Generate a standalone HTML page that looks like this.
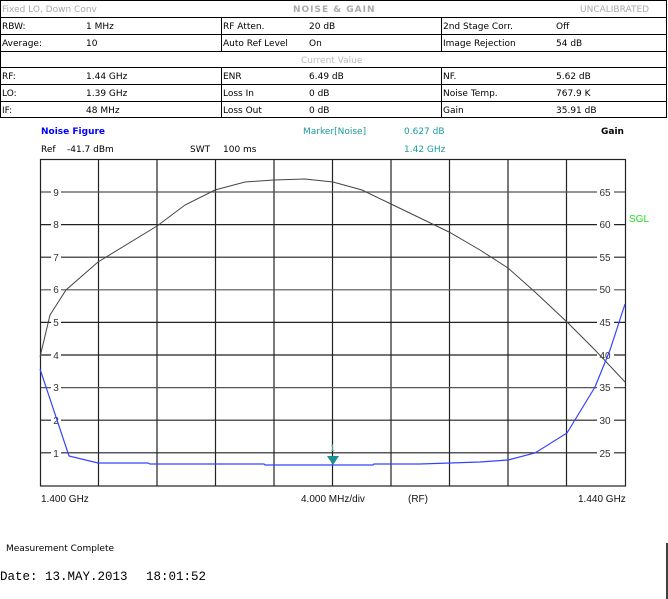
<!DOCTYPE html>
<html><head><meta charset="utf-8"><style>
html,body{margin:0;padding:0;background:#fff;width:668px;height:599px;overflow:hidden}
svg{display:block}
.t{font-family:"DejaVu Sans","Liberation Sans",sans-serif;font-size:9px}
.g{font-family:"Liberation Sans",sans-serif;font-size:10px}
</style></head><body>
<svg width="668" height="599" xmlns="http://www.w3.org/2000/svg">
<g stroke="#000" stroke-width="1" fill="none">
<rect x="0.5" y="0.5" width="666" height="117"/>
<line x1="0" y1="17.5" x2="667" y2="17.5"/>
<line x1="0" y1="34.5" x2="667" y2="34.5"/>
<line x1="0" y1="51.5" x2="667" y2="51.5"/>
<line x1="0" y1="67.5" x2="667" y2="67.5"/>
<line x1="0" y1="84.5" x2="667" y2="84.5"/>
<line x1="0" y1="101.5" x2="667" y2="101.5"/>
<line x1="221.5" y1="17" x2="221.5" y2="51"/>
<line x1="441.5" y1="17" x2="441.5" y2="51"/>
<line x1="221.5" y1="67" x2="221.5" y2="118"/>
<line x1="441.5" y1="67" x2="441.5" y2="118"/>
</g>
<g class="t" fill="#000">
<text x="2" y="12" fill="#aaa">Fixed LO, Down Conv</text>
<text x="293" y="12" fill="#aaa" font-weight="bold" letter-spacing="1">NOISE &amp; GAIN</text>
<text x="580" y="12" fill="#aaa">UNCALIBRATED</text>
<text x="2" y="29">RBW:</text><text x="86" y="29">1 MHz</text>
<text x="223" y="29">RF Atten.</text><text x="309" y="29">20 dB</text>
<text x="443" y="29">2nd Stage Corr.</text><text x="556" y="29">Off</text>
<text x="2" y="46">Average:</text><text x="86" y="46">10</text>
<text x="223" y="46">Auto Ref Level</text><text x="309" y="46">On</text>
<text x="443" y="46">Image Rejection</text><text x="556" y="46">54 dB</text>
<text x="301" y="63" fill="#bbb">Current Value</text>
<text x="2" y="79">RF:</text><text x="86" y="79">1.44 GHz</text>
<text x="223" y="79">ENR</text><text x="309" y="79">6.49 dB</text>
<text x="443" y="79">NF.</text><text x="556" y="79">5.62 dB</text>
<text x="2" y="96">LO:</text><text x="86" y="96">1.39 GHz</text>
<text x="223" y="96">Loss In</text><text x="309" y="96">0 dB</text>
<text x="443" y="96">Noise Temp.</text><text x="556" y="96">767.9 K</text>
<text x="2" y="113">IF:</text><text x="86" y="113">48 MHz</text>
<text x="223" y="113">Loss Out</text><text x="309" y="113">0 dB</text>
<text x="443" y="113">Gain</text><text x="556" y="113">35.91 dB</text>
<text x="41" y="134" fill="#0000ff" font-weight="bold">Noise Figure</text>
<text x="303" y="134" fill="#1a9a9a">Marker[Noise]</text>
<text x="404" y="134" fill="#1a9a9a">0.627 dB</text>
<text x="601" y="134" font-weight="bold">Gain</text>
<text x="41" y="152">Ref</text><text x="67" y="152">-41.7 dBm</text>
<text x="190" y="152">SWT</text><text x="223" y="152">100 ms</text>
<text x="404" y="152" fill="#1a9a9a">1.42 GHz</text>
<text x="6" y="551">Measurement Complete</text>
</g>
<g stroke="#222" stroke-width="1.2">
<line x1="98.5" y1="159" x2="98.5" y2="486"/><line x1="157" y1="159" x2="157" y2="486"/>
<line x1="215.5" y1="159" x2="215.5" y2="486"/><line x1="274" y1="159" x2="274" y2="486"/>
<line x1="332.5" y1="159" x2="332.5" y2="486"/><line x1="391" y1="159" x2="391" y2="486"/>
<line x1="449.5" y1="159" x2="449.5" y2="486"/><line x1="508" y1="159" x2="508" y2="486"/>
<line x1="566.5" y1="159" x2="566.5" y2="486"/>
<line x1="40" y1="192" x2="625" y2="192" stroke="#555"/><line x1="40" y1="224.6" x2="625" y2="224.6"/>
<line x1="40" y1="257.2" x2="625" y2="257.2"/><line x1="40" y1="289.8" x2="625" y2="289.8" stroke="#555"/>
<line x1="40" y1="322.4" x2="625" y2="322.4"/><line x1="40" y1="355" x2="625" y2="355"/>
<line x1="40" y1="387.6" x2="625" y2="387.6" stroke="#555"/><line x1="40" y1="420.2" x2="625" y2="420.2"/>
<line x1="40" y1="452.8" x2="625" y2="452.8"/>
</g>
<rect x="40.5" y="159.5" width="585" height="326.5" fill="none" stroke="#222" stroke-width="1.2"/>
<g fill="#fff"><rect x="51" y="186" width="10" height="12"/><rect x="51" y="218" width="10" height="12"/><rect x="51" y="251" width="10" height="12"/><rect x="51" y="284" width="10" height="12"/><rect x="51" y="316" width="10" height="12"/><rect x="51" y="349" width="10" height="12"/><rect x="51" y="381" width="10" height="12"/><rect x="51" y="414" width="10" height="12"/><rect x="51" y="447" width="10" height="12"/>
<rect x="597" y="186" width="17" height="12"/><rect x="597" y="218" width="17" height="12"/><rect x="597" y="251" width="17" height="12"/><rect x="597" y="284" width="17" height="12"/><rect x="597" y="316" width="17" height="12"/><rect x="597" y="349" width="17" height="12"/><rect x="597" y="381" width="17" height="12"/><rect x="597" y="414" width="17" height="12"/><rect x="597" y="447" width="17" height="12"/></g>
<g class="g" text-anchor="middle" fill="#333">
<text x="56" y="196">9</text><text x="56" y="228">8</text><text x="56" y="261">7</text><text x="56" y="293">6</text><text x="56" y="326">5</text><text x="56" y="359">4</text><text x="56" y="391">3</text><text x="56" y="424">2</text><text x="56" y="457">1</text>
<text x="605" y="196">65</text><text x="605" y="228">60</text><text x="605" y="261">55</text><text x="605" y="293">50</text><text x="605" y="326">45</text><text x="605" y="359">40</text><text x="605" y="391">35</text><text x="605" y="424">30</text><text x="605" y="457">25</text>
</g>
<text x="629" y="222" style="font-family:'Liberation Sans',sans-serif;font-size:10px;fill:#22dd22">SGL</text>
<polyline fill="none" stroke="#444" stroke-width="1" points="40,357 50,315 66,290 98,262 157,226 185,205 215,190 245,182 274,180 305,179 333,182 362,190 391,204 420,218 449,232 480,250 508,268 535,292 567,322 595,350 625,382"/>
<polyline fill="none" stroke="#3344ff" stroke-width="1.2" points="40,369 69,456 98,463 148,463 150,464 264,464 265,465 373,465 374,464 420,464 480,462 508,460 535,453 567,433 595,387 610,350 625,304"/>
<polygon points="327,456 339,456 333,465" fill="#1a9090"/>
<text x="330" y="451" style="font-family:'Liberation Sans',sans-serif;font-size:9px;fill:#6ababa">1</text>
<g class="g" fill="#111">
<text x="41" y="502">1.400 GHz</text>
<text x="301" y="502">4.000 MHz/div</text>
<text x="408" y="502">(RF)</text>
<text x="578" y="502">1.440 GHz</text>
</g>
<line x1="667" y1="543" x2="667" y2="599" stroke="#000" stroke-width="1.5"/>
<g font-family="Liberation Mono,monospace" font-size="12.5" fill="#000">
<text x="0" y="580">Date: 13.MAY.2013</text>
<text x="146" y="580">18:01:52</text>
</g>
</svg>
</body></html>
